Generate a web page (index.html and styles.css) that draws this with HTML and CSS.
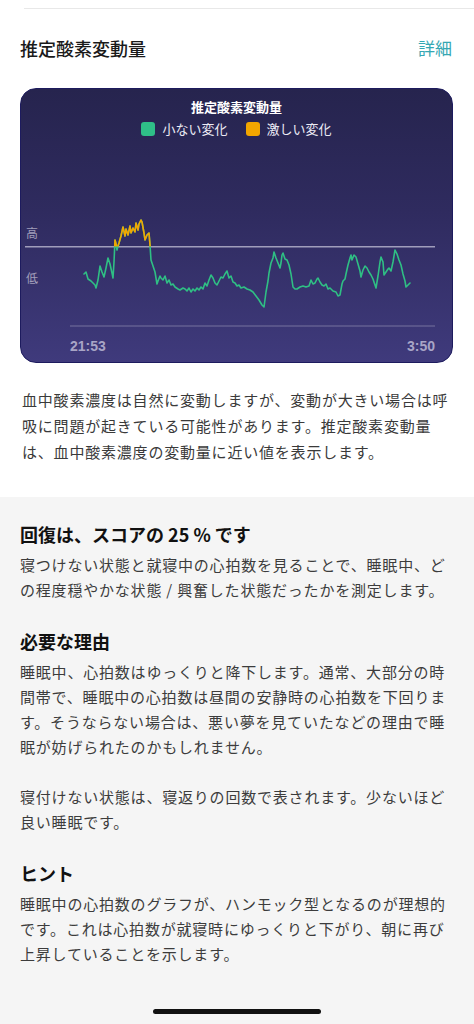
FILE: index.html
```html
<!DOCTYPE html>
<html lang="ja">
<head>
  <meta charset="UTF-8">
  <meta name="viewport" content="width=device-width, initial-scale=1.0">
  <title>推定酸素変動量</title>
  <link rel="stylesheet" href="styles.css">
</head>
<body>
  <section class="top">
    <div class="divider"></div>

    <div class="head-row">
      <h2 class="head-title">推定酸素変動量</h2>
      <a class="head-link" href="#">詳細</a>
    </div>

    <div class="chart-card">
      <div class="chart-title">推定酸素変動量</div>
      <div class="legend">
        <span class="legend-item"><span class="swatch green"></span>小ない変化</span>
        <span class="legend-item"><span class="swatch orange"></span>激しい変化</span>
      </div>

      <!-- plot drawn in page coordinates -->
      <svg class="plot" width="431" height="219" viewBox="21 138 431 219">
        <defs>
          <clipPath id="above" clipPathUnits="userSpaceOnUse">
            <rect x="0" y="0" width="474" height="246.5"></rect>
          </clipPath>
        </defs>

        <text class="axis-label" x="26" y="238">高</text>
        <text class="axis-label" x="26" y="283">低</text>

        <line class="limit" x1="25" y1="246.7" x2="435" y2="246.7"></line>
        <line class="base" x1="70" y1="326" x2="435" y2="326"></line>

        <g id="series">
          <polyline class="trace green-line" points="84,274 86,272 88,279 91,281 93,283 95,285 96,288 98,280 100,266 102,272 104,277 106,268 108,258 110,264 112,273 113,278 114,262 115,240 116,244 117,250 118,246 119,243 121,236 123,227 125,236 126,229 128,235 130,226 131,233 133,228 135,232 136,223 138,230 139,224 141,220 142,222 144,233 145,240 147,235 149,233 150,245 151,260 153,266 155,272 157,284 158,281 160,276 161,278 163,280 165,276 167,283 169,280 171,285 173,284 175,287 178,289 180,290 183,288 185,289 187,291 189,288 191,292 193,289 195,291 197,288 199,290 201,287 203,289 205,283 207,286 209,280 211,275 213,278 215,283 217,285 219,281 221,277 223,278 225,274 227,271 229,278 231,276 233,282 235,283 237,286 239,285 241,288 244,287 247,289 250,290 253,292 256,296 259,300 262,305 264,307 266,292 268,281 269,273 271,263 273,258 274,252 276,258 278,263 280,268 281,263 282,255 283,253 285,259 287,260 289,265 291,274 293,287 295,289 297,289 300,287 303,286 306,287 309,286 311,280 313,284 315,283 317,279 318,278 320,282 322,285 324,286 326,284 328,289 330,288 333,291 336,292 338,296 340,295 342,284 343,281 345,279 346,274 348,265 350,258 351,255 352,260 354,255 356,257 358,264 360,271 361,277 363,270 365,266 367,268 369,272 371,275 373,279 375,285 376,288 378,276 380,262 381,257 383,262 384,275 386,272 388,269 389,268 391,271 393,262 395,250 397,254 399,260 401,265 403,274 405,281 406,287 408,285 410,283"></polyline>
        </g>
        <g clip-path="url(#above)">
          <polyline class="trace orange-line" points="112,273 113,278 114,262 115,240 116,244 117,250 118,246 119,243 121,236 123,227 125,236 126,229 128,235 130,226 131,233 133,228 135,232 136,223 138,230 139,224 141,220 142,222 144,233 145,240 147,235 149,233 150,245 151,260"></polyline>
        </g>

        <text class="time" x="70" y="351">21:53</text>
        <text class="time" x="435" y="351" text-anchor="end">3:50</text>
      </svg>
    </div>

    <p class="desc">血中酸素濃度は自然に変動しますが、変動が大きい場合は呼吸に問題が起きている可能性があります。推定酸素変動量は、血中酸素濃度の変動量に近い値を表示します。</p>
  </section>

  <section class="info">
    <h3 class="info-title">回復は、スコアの 25 % です</h3>
    <p class="info-text">寝つけない状態と就寝中の心拍数を見ることで、睡眠中、どの程度穏やかな状態 / 興奮した状態だったかを測定します。</p>

    <h3 class="info-title">必要な理由</h3>
    <p class="info-text">睡眠中、心拍数はゆっくりと降下します。通常、大部分の時間帯で、睡眠中の心拍数は昼間の安静時の心拍数を下回ります。そうならない場合は、悪い夢を見ていたなどの理由で睡眠が妨げられたのかもしれません。</p>
    <p class="info-text">寝付けない状態は、寝返りの回数で表されます。少ないほど良い睡眠です。</p>

    <h3 class="info-title">ヒント</h3>
    <p class="info-text">睡眠中の心拍数のグラフが、ハンモック型となるのが理想的です。これは心拍数が就寝時にゆっくりと下がり、朝に再び上昇していることを示します。</p>
  </section>

  <div class="home-bar"></div>
</body>
</html>
```

FILE: styles.css
```css
html {
  background-color: #f5f5f5;
}

body {
  margin: 0;
  padding: 0;
  font-family: 'Noto Sans CJK JP', 'Noto Sans', sans-serif;
  color: #3a3a3a;
  min-height: 1024px;
  background-color: #f5f5f5;
}

.top {
  background-color: #fff;
  padding: 8px 0 32px;
}

.divider {
  height: 1px;
  margin-left: 24px;
  background-color: #e8e8e8;
}

.head-row {
  display: flex;
  justify-content: space-between;
  align-items: center;
  margin: 26px 22px 0 20px;
  height: 26px;
}

.head-title {
  margin: 0;
  font-size: 18px;
  font-weight: 500;
  line-height: 26px;
  color: #1a1a1a;
}

.head-link {
  font-size: 17px;
  line-height: 26px;
  color: #35a7b3;
  text-decoration: none;
}

.chart-card {
  box-sizing: border-box;
  width: 433px;
  height: 275px;
  margin: 27px 0 0 20px;
  padding: 9px 0 5px;
  border: 1px solid #1d1b5e;
  border-radius: 16px;
  background: linear-gradient(180deg, #26244e 0%, #2f2b5f 45%, #3f3a7c 100%);
  display: flex;
  flex-direction: column;
  align-items: center;
  overflow: hidden;
}

.chart-title {
  font-size: 13px;
  font-weight: bold;
  line-height: 18px;
  color: #fff;
}

.legend {
  display: flex;
  gap: 18px;
  margin-top: 4px;
  font-size: 13px;
  line-height: 18px;
  color: #ecebf4;
}

.legend-item {
  display: flex;
  align-items: center;
  gap: 7px;
}

.swatch {
  width: 14px;
  height: 14px;
  border-radius: 3px;
}

.swatch.green {
  background-color: #2fbf88;
}

.swatch.orange {
  background-color: #f2a600;
}

.plot {
  display: block;
}

.axis-label {
  font-size: 12px;
  fill: #a19eba;
}

.limit {
  stroke: #a09dbb;
  stroke-width: 1.5;
}

.base {
  stroke: #77739f;
  stroke-width: 1;
}

.trace {
  fill: none;
  stroke-width: 1.6;
  stroke-linejoin: round;
  stroke-linecap: round;
}

.green-line {
  stroke: #2fbf84;
}

.orange-line {
  stroke: #f2a600;
}

.time {
  font-family: 'Liberation Sans', sans-serif;
  font-size: 14px;
  font-weight: bold;
  fill: #a8a5c6;
}

.desc {
  margin: 24px 22px 0 22px;
  font-size: 15px;
  line-height: 26px;
  letter-spacing: 0.8px;
  color: #3a3a3a;
}

.info {
  padding: 25px 20px 40px;
  background-color: #f5f5f5;
}

.info-title {
  margin: 27px 0 5px;
  font-size: 18px;
  font-weight: bold;
  line-height: 25px;
  color: #111;
}

.info-title:first-child {
  margin-top: 0;
}

.info-text {
  margin: 0;
  font-size: 15px;
  line-height: 25px;
  letter-spacing: 0.8px;
  color: #3c3c3c;
}

.info-text + .info-text {
  margin-top: 25px;
}

.home-bar {
  position: fixed;
  left: 153px;
  bottom: 10px;
  width: 168px;
  height: 5px;
  border-radius: 3px;
  background-color: #111;
}
```
